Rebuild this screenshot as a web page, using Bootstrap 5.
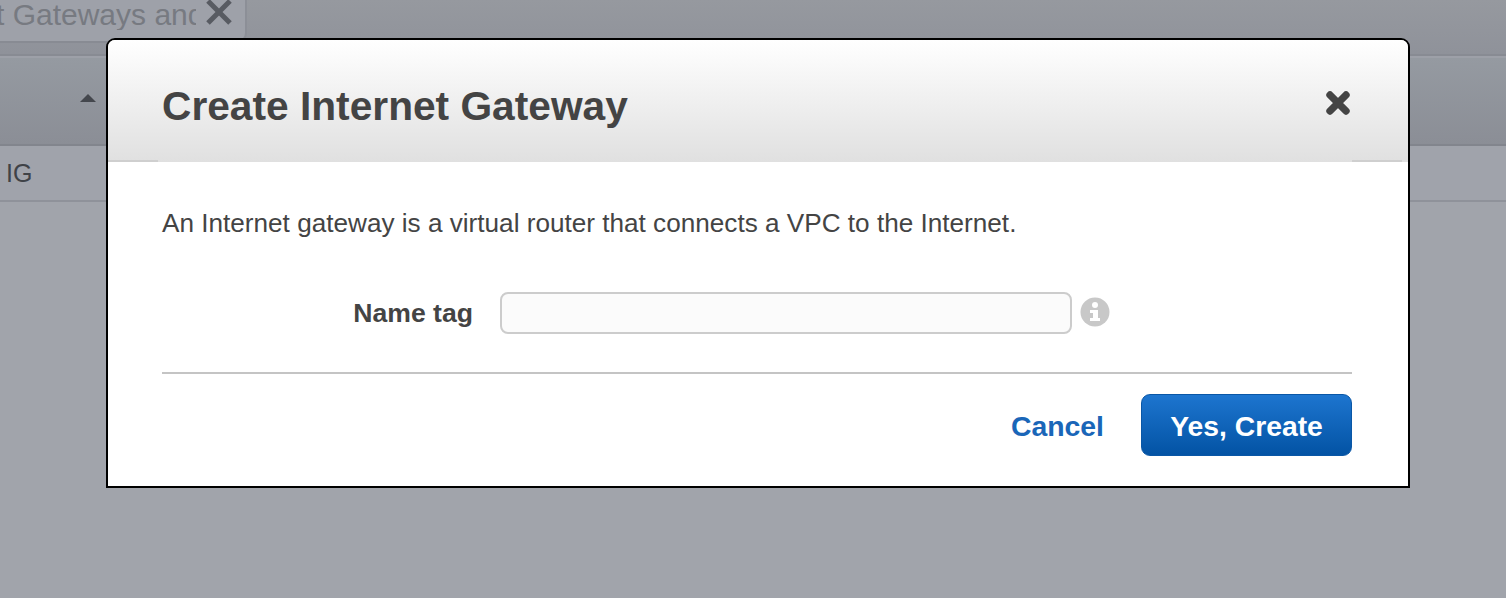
<!DOCTYPE html>
<html lang="en">
<head>
<meta charset="utf-8">
<title>Create Internet Gateway</title>
<link rel="stylesheet" href="https://cdn.jsdelivr.net/npm/bootstrap@5.3.0/dist/css/bootstrap.min.css">
<style>
html,body{height:100%;}
body{margin:0;background:#a1a4ab;font-family:"Liberation Sans",Arial,sans-serif;color:#444;overflow:hidden;}
.pg{position:relative;height:598px;overflow:hidden;}
.tabbar{height:56px;background:linear-gradient(#96999f,#8f929a);border-bottom:2px solid #888b93;}
.tabitem{width:247px;height:43px;background:#9ea1a9;border-right:2px solid #8c8f97;border-bottom:2px solid #888b93;border-bottom-right-radius:10px;overflow:hidden;font-size:30px;line-height:30px;color:#777a81;}
.tabtext{width:200px;overflow:hidden;white-space:nowrap;flex:none;margin-left:-4px;}
.thead-bar{height:90px;background:linear-gradient(#959aa1,#8b8e96);border-top:2px solid #9da0a8;border-bottom:2px solid #82858d;padding-left:80px;padding-top:36px;}
.caret-up{width:0;height:0;border-left:8px solid transparent;border-right:8px solid transparent;border-bottom:8px solid #44474d;}
.trow{height:56px;border-bottom:2px solid #8f929a;padding-left:6px;font-size:25px;line-height:54px;color:#3f4247;background:#a0a3ab;}
.dlg{position:absolute;left:106px;top:38px;width:1304px;height:450px;background:#fff;border:2px solid #000;border-radius:9px 9px 0 0;overflow:hidden;}
.dlg-head{height:122px;background:linear-gradient(#fff,#e0e0e0);padding:0 57px 0 54px;position:relative;}
.head-rule{position:absolute;height:2px;background:#cfcfcf;bottom:0;}
.head-rule.l1{left:0;width:50px;}
.head-rule.r1{right:6px;width:50px;}
.dlg-title{font-size:40.7px;font-weight:700;color:#444;margin:10px 0 0;line-height:1;}
.dlg-body{padding:46px 56px 0 54px;}
.intro{font-size:26.15px;line-height:30px;color:#444;margin:0 0 54px;}
.lbl{font-size:26.6px;font-weight:700;color:#444;width:311px;text-align:right;margin:0 27px 0 0;padding-top:1px;flex:none;}
.nameinput{width:572px;height:42px;background:#fbfbfb;border:2px solid #ccc;border-radius:8px;padding:0 10px;flex:none;}
.nameinput:focus{background:#fbfbfb;border-color:#ccc;box-shadow:none;}
.infoico{width:30px;height:30px;margin:-2px 0 0 8px;flex:none;display:block;}
.rule{height:2px;background:#c4c4c4;margin:38px 0 20px;}
.cancel{font-size:28.4px;font-weight:700;color:#1a66b8;text-decoration:none;margin-right:37px;padding-top:2px;}
.yes{width:211px;height:62px;font-size:28.3px;font-weight:700;color:#fff;background:linear-gradient(#1d75cf,#0353a4);border:1px solid #0a57a6;border-radius:9px;padding:2px 0 0;}
.xclose{width:26px;height:26px;display:block;margin-top:4px;}
.tabx{width:30px;height:30px;display:block;flex:none;margin:-2px 0 0 8px;}
</style>
</head>
<body>
<div class="pg">
  <div class="tabbar">
    <div class="tabitem d-flex align-items-start">
      <span class="tabtext">t Gateways and</span>
      <svg class="tabx" viewBox="0 0 30 30"><path d="M4 3 L26 25 M26 3 L4 25" stroke="#585b62" stroke-width="5" fill="none"/></svg>
    </div>
  </div>
  <div class="thead-bar"><div class="caret-up"></div></div>
  <div class="trow">IG</div>

  <div class="dlg" role="dialog">
    <div class="dlg-head d-flex align-items-center justify-content-between">
      <h1 class="dlg-title">Create Internet Gateway</h1>
      <svg class="xclose" viewBox="0 0 26 26"><path d="M5 5 L21 21 M21 5 L5 21" stroke="#444" stroke-width="7.4" stroke-linecap="round" fill="none"/></svg>
      <span class="head-rule l1"></span><span class="head-rule r1"></span>
    </div>
    <div class="dlg-body">
      <p class="intro">An Internet gateway is a virtual router that connects a VPC to the Internet.</p>
      <div class="d-flex align-items-center">
        <label class="lbl" for="nt">Name tag</label>
        <input id="nt" class="form-control nameinput" type="text">
        <svg class="infoico" viewBox="0 0 30 30"><circle cx="15" cy="15" r="14.5" fill="#c8c8c8"/><circle cx="15" cy="8" r="3" fill="#fff"/><path d="M10 13 H18 V21 H20 V24 H10 V21 H13 V16 H10 Z" fill="#fff"/></svg>
      </div>
      <div class="rule"></div>
      <div class="d-flex justify-content-end align-items-center">
        <a class="cancel" href="#">Cancel</a>
        <button class="btn yes" type="button">Yes, Create</button>
      </div>
    </div>
  </div>
</div>
<script src="https://cdn.jsdelivr.net/npm/bootstrap@5.3.0/dist/js/bootstrap.bundle.min.js"></script>
</body>
</html>
